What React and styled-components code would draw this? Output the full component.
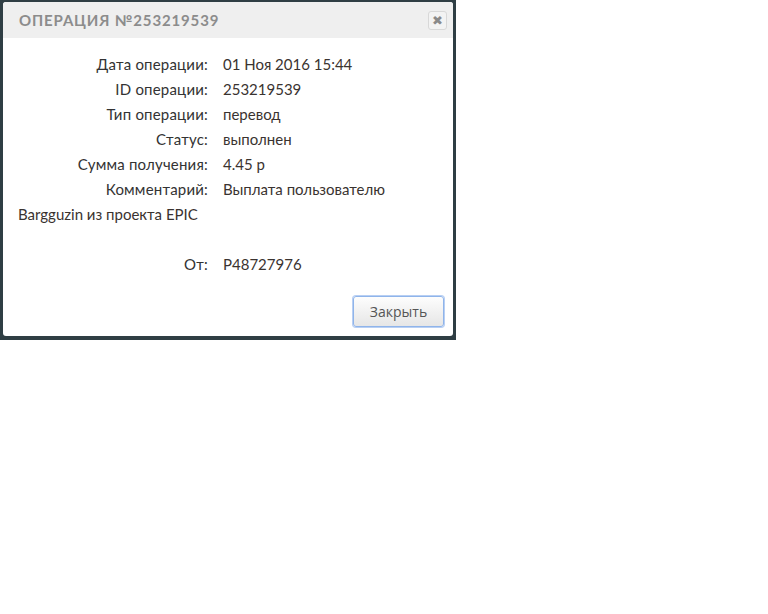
import styled, { createGlobalStyle } from "styled-components";

const GlobalStyle = createGlobalStyle`
  html, body {
    margin: 0;
    padding: 0;
    background: #fff;
  }
`;

const Overlay = styled.div`
  width: 450px;
  padding: 2px 3px 4px 3px;
  background: #2f3e44;
`;

const Dialog = styled.div`
  background: #fff;
  border-radius: 3px;
  overflow: hidden;
  font-family: Lato, "Liberation Sans", sans-serif;
  color: #333;
`;

const Header = styled.div`
  display: flex;
  align-items: center;
  justify-content: space-between;
  height: 36px;
  padding: 0 6px 0 16px;
  background: #efefef;
`;

const Title = styled.h1`
  margin: 0;
  font-family: Lato, "Liberation Sans", sans-serif;
  font-size: 15px;
  font-weight: 700;
  letter-spacing: 0.85px;
  color: #8c8c8c;
`;

const CloseButton = styled.button`
  width: 19px;
  height: 19px;
  padding: 0;
  display: flex;
  align-items: center;
  justify-content: center;
  border: 1px solid #d8d8d8;
  border-radius: 3px;
  background: #f3f3f3;
  color: #8a8a8a;
  font-size: 13px;
  line-height: 1;
  cursor: pointer;
`;

const Body = styled.div`
  padding: 14px 15px 0 15px;
  font-size: 15px;
  line-height: 25px;
`;

const Row = styled.div`
  min-height: ${p => (p.$empty ? "25px" : "auto")};
`;

const Label = styled.span`
  display: inline-block;
  width: 190px;
  margin-right: 15px;
  text-align: right;
  letter-spacing: 0.2px;
`;

const Value = styled.span`
  color: #3a3330;
`;

const Footer = styled.div`
  display: flex;
  justify-content: flex-end;
  padding: 19px 9px 9px 0;
`;

const Button = styled.button`
  width: 91px;
  height: 31px;
  border: 1px solid #8fb4ea;
  border-radius: 3px;
  background: linear-gradient(#fdfdfd, #e6e6e6);
  box-shadow: 0 0 0 1px #b8cff3;
  font-family: "Open Sans", "DejaVu Sans", sans-serif;
  font-size: 14px;
  color: #555;
  cursor: pointer;
`;

const rows = [
  ["Дата операции:", "01 Ноя 2016 15:44"],
  ["ID операции:", "253219539"],
  ["Тип операции:", "перевод"],
  ["Статус:", "выполнен"],
  ["Сумма получения:", "4.45 р"],
];

export default function App() {
  return (
    <>
      <GlobalStyle />
      <Overlay>
        <Dialog>
          <Header>
            <Title>ОПЕРАЦИЯ №253219539</Title>
            <CloseButton aria-label="close">✖</CloseButton>
          </Header>
          <Body>
            {rows.map(([label, value]) => (
              <Row key={label}>
                <Label>{label}</Label>
                <Value>{value}</Value>
              </Row>
            ))}
            <Row>
              <Label>Комментарий:</Label>
              <Value>
                Выплата пользователю
                <br />
                Bargguzin из проекта EPIC
              </Value>
            </Row>
            <Row $empty />
            <Row>
              <Label>От:</Label>
              <Value>P48727976</Value>
            </Row>
          </Body>
          <Footer>
            <Button>Закрыть</Button>
          </Footer>
        </Dialog>
      </Overlay>
    </>
  );
}
